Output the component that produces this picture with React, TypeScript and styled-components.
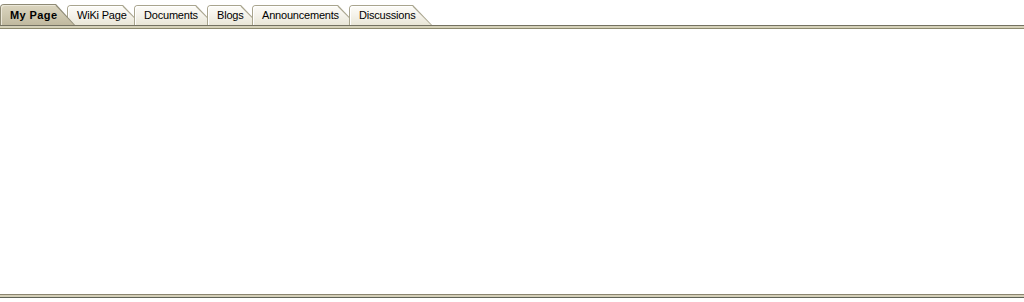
import styled, { createGlobalStyle } from "styled-components";

// DATA
const tabs = [
  { label: "My Page", width: 75, active: true },
  { label: "WiKi Page", width: 75 },
  { label: "Documents", width: 81 },
  { label: "Blogs", width: 53 },
  { label: "Announcements", width: 105 },
  { label: "Discussions", width: 83 },
];

const SLANT = 19;

function App() {
  return (
    <>
      <GlobalStyle />
      <Page>
        <TabStrip>
          {tabs.map((tab, i) => (
            <Tab key={tab.label} $active={!!tab.active} $first={i === 0} $width={tab.width}>
              <TabLabel $active={!!tab.active}>{tab.label}</TabLabel>
            </Tab>
          ))}
        </TabStrip>
        <Rule $top="#747262" $band="#d5d1b9" $bottom="#8d8a6e" />
        <Content />
        <Rule $top="#8b8570" $band="#d4cfb8" $bottom="#5f6358" />
        <Footer />
      </Page>
    </>
  );
}

// STYLED COMPONENTS
const GlobalStyle = createGlobalStyle`
  html, body {
    margin: 0;
    padding: 0;
    background: #ffffff;
  }
  body {
    font-family: "Liberation Sans", Arial, sans-serif;
  }
`;

const Page = styled.div`
  display: flex;
  flex-direction: column;
  height: 302px;
  width: 1024px;
  overflow: hidden;
`;

const TabStrip = styled.div`
  align-items: flex-end;
  display: flex;
  height: 25px;
`;

const Tab = styled.div<{ $active: boolean; $first: boolean; $width: number }>`
  align-items: center;
  box-sizing: border-box;
  display: flex;
  flex: none;
  height: ${(p) => (p.$active ? 21 : 20)}px;
  margin-left: ${(p) => (p.$first ? 0 : -8)}px;
  padding: 1px 0 0 10px;
  position: relative;
  width: ${(p) => p.$width}px;
  z-index: ${(p) => (p.$active ? 10 : 1)};

  &::before,
  &::after {
    content: "";
    position: absolute;
    z-index: 0;
  }

  &::before {
    background: ${(p) => (p.$active ? "#8e8a75" : "#a9a58e")};
    border-top-left-radius: 4px;
    clip-path: polygon(0 0, calc(100% - ${SLANT}px) 0, 100% 100%, 0 100%);
    inset: 0;
  }

  &::after {
    background: ${(p) =>
      p.$active
        ? "linear-gradient(to bottom, #dbd5bf 0%, #cfc9b1 45%, #c0b99f 100%)"
        : "linear-gradient(to bottom, #fdfcf8 0%, #f4f2ea 50%, #e9e6d7 100%)"};
    border-top-left-radius: 3px;
    bottom: 0;
    box-shadow: ${(p) => (p.$active ? "inset 1px 1px 0 #ebe7d8" : "inset 1px 1px 0 #ffffff")};
    clip-path: polygon(0 0, calc(100% - ${SLANT}px) 0, 100% 100%, 0 100%);
    left: 1px;
    right: 1px;
    top: 1px;
  }
`;

const TabLabel = styled.span<{ $active: boolean }>`
  color: #000000;
  font-size: 11px;
  font-weight: ${(p) => (p.$active ? 700 : 400)};
  letter-spacing: ${(p) => (p.$active ? "0.4px" : "-0.2px")};
  line-height: 13px;
  position: relative;
  white-space: nowrap;
  z-index: 1;
`;

const Rule = styled.div<{ $top: string; $band: string; $bottom: string }>`
  background: ${(p) => p.$band};
  border-bottom: 1px solid ${(p) => p.$bottom};
  border-top: 1px solid ${(p) => p.$top};
  flex: none;
  height: 2px;
`;

const Content = styled.div`
  background: #ffffff;
  flex: none;
  height: 265px;
`;

const Footer = styled.div`
  flex: 1;
`;

export default App;
